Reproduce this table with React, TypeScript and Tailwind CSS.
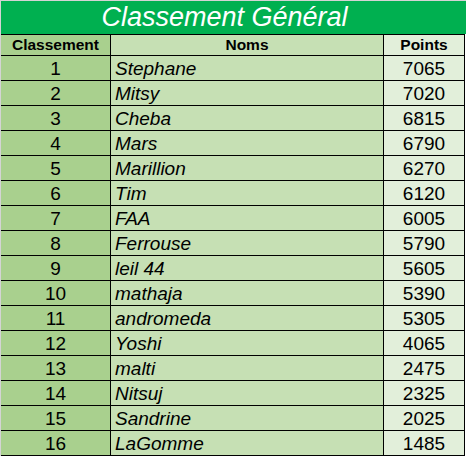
import React from "react";

const rows: [number, string, number][] = [
  [1, "Stephane", 7065],
  [2, "Mitsy", 7020],
  [3, "Cheba", 6815],
  [4, "Mars", 6790],
  [5, "Marillion", 6270],
  [6, "Tim", 6120],
  [7, "FAA", 6005],
  [8, "Ferrouse", 5790],
  [9, "leil 44", 5605],
  [10, "mathaja", 5390],
  [11, "andromeda", 5305],
  [12, "Yoshi", 4065],
  [13, "malti", 2475],
  [14, "Nitsuj", 2325],
  [15, "Sandrine", 2025],
  [16, "LaGomme", 1485],
];

export default function App() {
  return (
    <div
      className="w-[466px] h-[456px] bg-white border-t border-l border-[#d4d4d4] overflow-hidden text-black"
      style={{ fontFamily: '"Liberation Sans", Arial, sans-serif' }}
    >
      <div className="h-[33px] w-[465px] bg-[#00B050] flex items-center justify-center pr-[18px]">
        <span className="text-white italic text-[27px] leading-none">Classement Général</span>
      </div>
      <div className="w-[464px] border-t border-black">
        <div className="flex h-[21px] border-b border-black text-[15.5px] font-bold leading-none">
          <div className="w-[110px] border-r border-black bg-[#A9D08E] flex items-center justify-center">Classement</div>
          <div className="w-[273px] border-r border-black bg-[#C6E0B4] flex items-center justify-center">Noms</div>
          <div className="w-[81px] border-r border-black bg-[#E2EFDA] flex items-center justify-center">Points</div>
        </div>
        {rows.map(([n, name, pts]) => (
          <div key={n} className="flex h-[25px] border-b border-black text-[19px] leading-none">
            <div className="w-[110px] border-r border-black bg-[#A9D08E] flex items-center justify-center">{n}</div>
            <div className="w-[273px] border-r border-black bg-[#C6E0B4] flex items-center pl-[4px] italic">{name}</div>
            <div className="w-[81px] border-r border-black bg-[#E2EFDA] flex items-center justify-center">{pts}</div>
          </div>
        ))}
      </div>
    </div>
  );
}
